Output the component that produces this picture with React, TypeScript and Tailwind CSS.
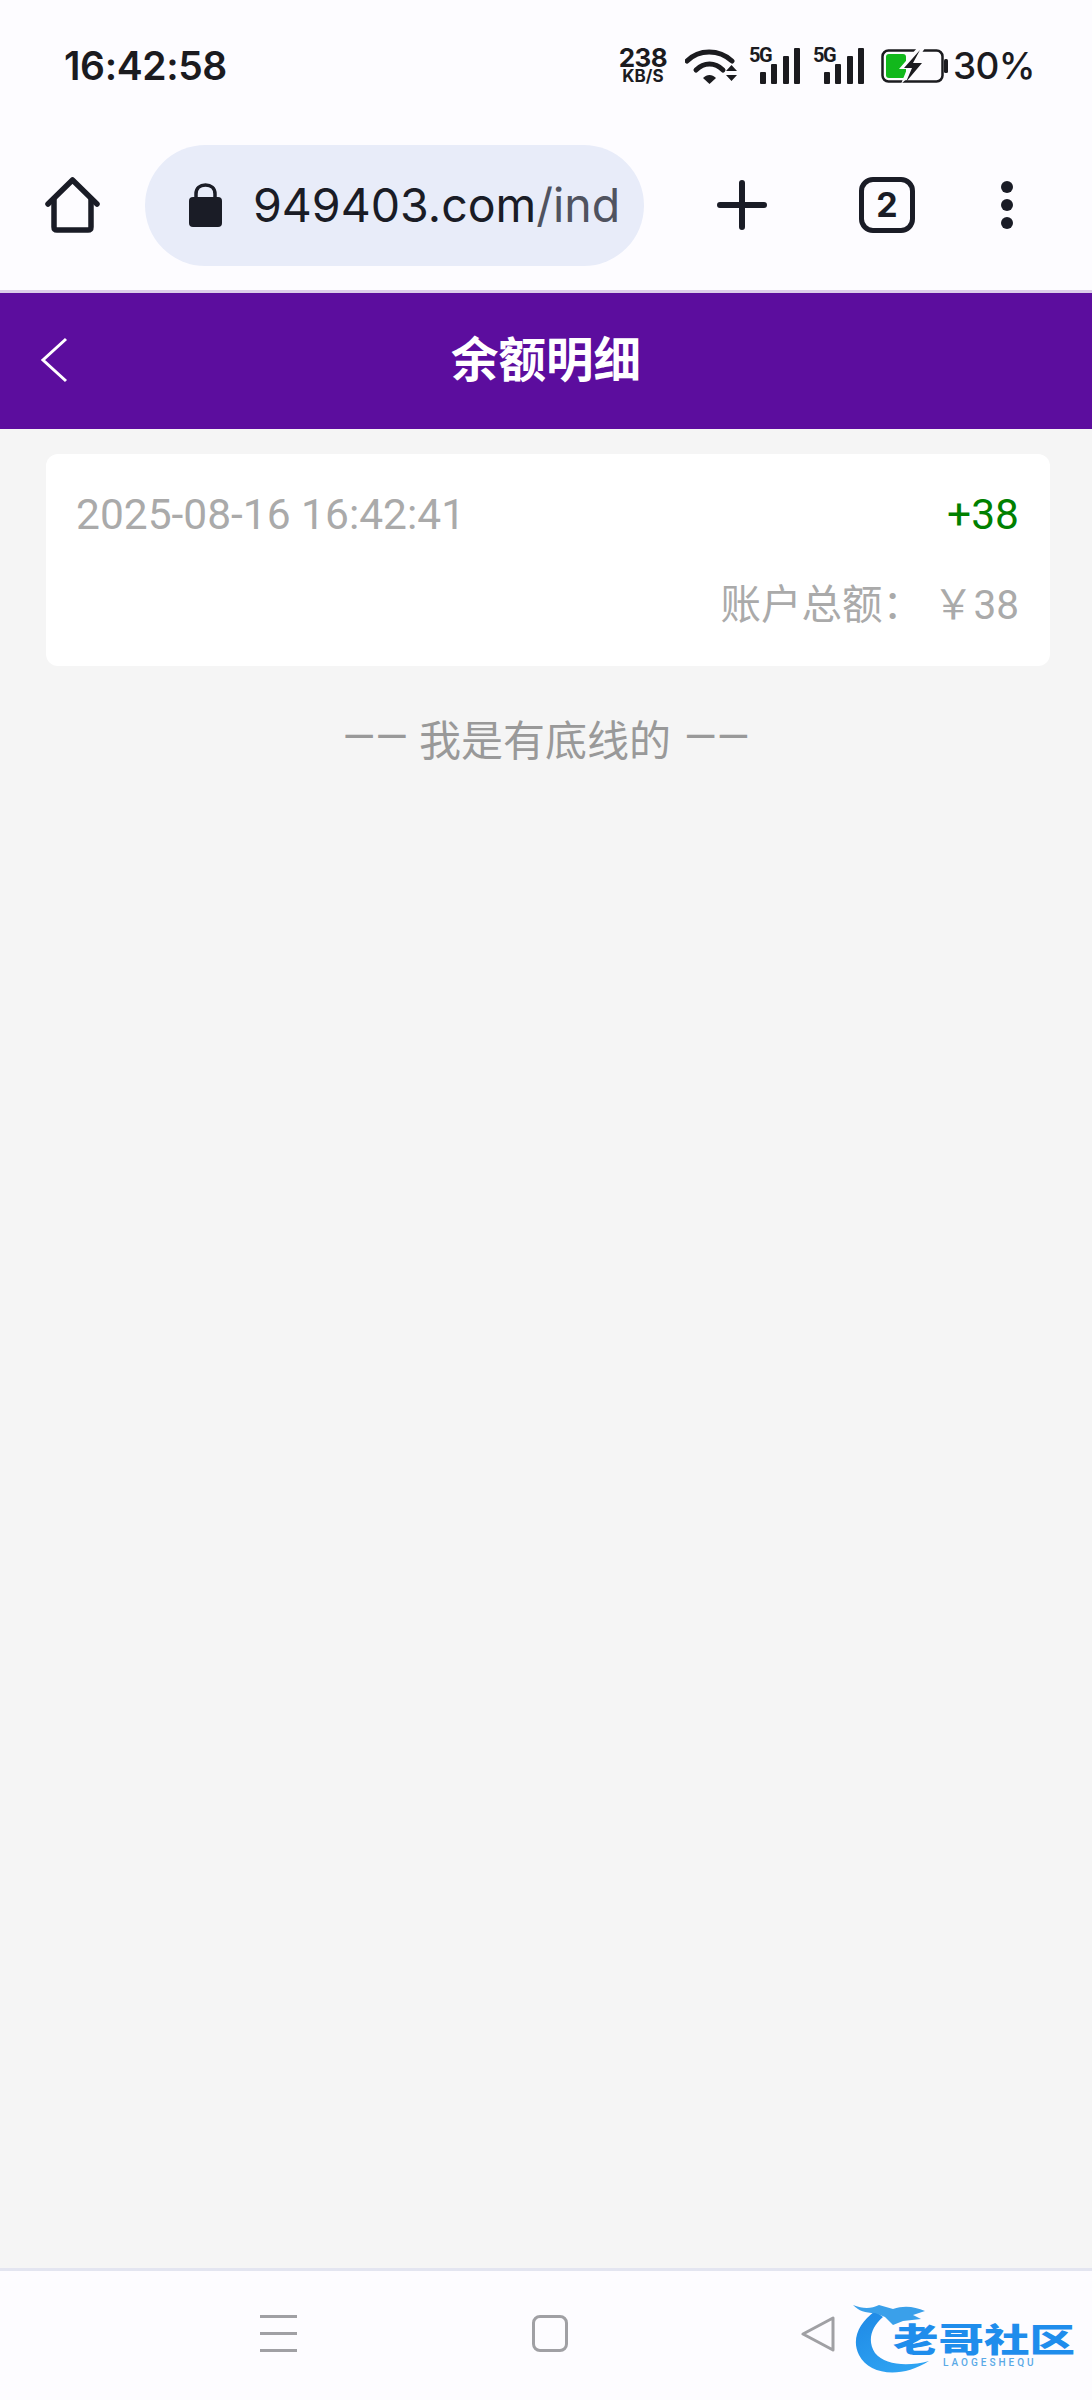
const inter = "font-['Inter','Noto_Sans_CJK_SC',sans-serif]";

function SignalIcon() {
  return (
    <div className="relative h-[36px] w-[50px]">
      <span className="absolute left-[-1px] top-[-3px] font-['Roboto',sans-serif] text-[20px] font-bold leading-[20px] tracking-[-1.5px] text-[#1b1b1f]">5G</span>
      <svg viewBox="0 0 50 36" className="h-[36px] w-[50px]" fill="#1b1b1f">
        <rect x="10" y="24" width="6" height="12" rx="1" />
        <rect x="21" y="16" width="6" height="20" rx="1" />
        <rect x="33" y="8" width="6" height="28" rx="1" />
        <rect x="44" y="0" width="6" height="36" rx="1" />
      </svg>
    </div>
  );
}

function StatusBar() {
  return (
    <div className="flex h-[130px] items-center justify-between pl-[64px] pr-[57px] pt-[1px]">
      <span className={`${inter} text-[39px] font-semibold leading-none tracking-[-0.4px] text-[#1b1b1f]`}>16:42:58</span>
      <div className="flex items-center">
        <div className={`${inter} flex w-[52px] flex-col items-center text-[#1b1b1f]`}>
          <span className="text-[26px] font-bold leading-[22px] tracking-[-0.5px]">238</span>
          <span className="text-[17px] font-bold leading-[15px]">KB/S</span>
        </div>
        <svg viewBox="0 0 52 36" className="ml-[16px] h-[36px] w-[52px]">
          <path d="M2 13 C14 1 34 1 47 13" fill="none" stroke="#1b1b1f" strokeWidth="5" strokeLinecap="round" />
          <path d="M11 22 C19 14 30 14 38 22" fill="none" stroke="#1b1b1f" strokeWidth="5" strokeLinecap="round" />
          <path d="M18 30 L24.500 36 L31 30 C27 26 22 26 18 30 Z" fill="#1b1b1f" />
          <path d="M41 23 L46.500 17 L52 23 Z M41 27 L52 27 L46.500 33 Z" fill="#1b1b1f" />
        </svg>
        <div className="ml-[13px]"><SignalIcon /></div>
        <div className="ml-[14px]"><SignalIcon /></div>
        <svg viewBox="0 0 68 36" className="ml-[17px] h-[36px] w-[68px]">
          <rect x="1.500" y="2.500" width="60" height="31" rx="6" fill="none" stroke="#1b1b1f" strokeWidth="2.500" />
          <rect x="5" y="6" width="20" height="24" rx="3" fill="#12b81c" />
          <rect x="63" y="11" width="4" height="14" rx="1.500" fill="#1b1b1f" />
          <path d="M36 0 L18 21 L26 21 L20 36 L44 14 L35 14 L44 0 Z" fill="#fdfcff" />
          <path d="M39 2 L23 20 L31 20 L25 34 L41 15 L32 15 Z" fill="#1b1b1f" />
        </svg>
        <span className={`${inter} ml-[4px] text-[37px] font-medium leading-none tracking-[-0.6px] text-[#1b1b1f]`}>30%</span>
      </div>
    </div>
  );
}

function Toolbar() {
  return (
    <div className="flex h-[160px] items-center pb-[10px] pl-[45px]">
      <svg viewBox="0 0 55 56" className="h-[56px] w-[55px]" fill="none" stroke="#1a1c26" strokeWidth="5.500" strokeLinejoin="round" strokeLinecap="round">
        <path d="M3 27 L27.500 3 L52 27" />
        <path d="M9 23 L9 50 C9 52 10 53 12 53 L43 53 C45 53 46 52 46 50 L46 23" />
      </svg>
      <div className="ml-[45px] flex h-[121px] w-[499px] items-center overflow-hidden rounded-full bg-[#e8ecf9] pl-[44px]">
        <svg viewBox="0 0 33 44" className="h-[44px] w-[33px] shrink-0" fill="#1a1c26">
          <path d="M7 15 L7 11 C7 5 11 2 16.500 2 C22 2 26 5 26 11 L26 15" fill="none" stroke="#1a1c26" strokeWidth="3.500" />
          <rect x="0" y="14" width="33" height="30" rx="4" />
        </svg>
        <span className="ml-[31px] whitespace-nowrap font-['Inter',sans-serif] text-[46.500px] font-normal leading-none text-[#1a1c26]">
          949403.com<span className="text-[#50535f]">/ind</span>
        </span>
      </div>
      <svg viewBox="0 0 50 50" className="ml-[73px] h-[50px] w-[50px]" stroke="#1a1c26" strokeWidth="6" strokeLinecap="round">
        <path d="M25 3 L25 47 M3 25 L47 25" />
      </svg>
      <div className={`${inter} ml-[92px] flex h-[56px] w-[56px] items-center justify-center rounded-[14px] border-[5.5px] border-[#1a1c26] text-[34px] font-bold leading-none text-[#1a1c26]`}>2</div>
      <div className="ml-[86px] flex flex-col gap-[6px]">
        <span className="h-[12px] w-[12px] rounded-full bg-[#1a1c26]" />
        <span className="h-[12px] w-[12px] rounded-full bg-[#1a1c26]" />
        <span className="h-[12px] w-[12px] rounded-full bg-[#1a1c26]" />
      </div>
    </div>
  );
}

function DetailCard() {
  return (
    <div className="ml-[46px] mr-[42px] mt-[25px] h-[212px] rounded-[12px] bg-white pl-[30px] pr-[31px] pt-[36px] font-['Roboto','Noto_Sans_CJK_SC',sans-serif] text-[42.500px] leading-[50px]">
      <div className="flex items-center justify-between">
        <span className="text-[#aaaaaa]">2025-08-16 16:42:41</span>
        <span className="text-[#008000]">+38</span>
      </div>
      <div className="mt-[40px] flex justify-end text-[40.500px] text-[#aaaaaa]">账户总额： ￥38</div>
    </div>
  );
}

function Logo() {
  return (
    <div className="absolute bottom-[25px] right-[17px] h-[72px] w-[222px]">
      <svg viewBox="0 0 222 72" className="absolute left-0 top-0 h-[72px] w-[222px]">
        <defs>
          <linearGradient id="logoRing" x1="0" y1="0" x2="0.600" y2="1">
            <stop offset="0" stopColor="#1e88e5" />
            <stop offset="1" stopColor="#2ea3f2" />
          </linearGradient>
        </defs>
        <path d="M22 8 C6 20 -2 36 6 52 C16 72 48 76 76 58 C54 64 32 62 22 50 C14 38 18 24 30 14 Z" fill="url(#logoRing)" />
        <path d="M0 2 C10 6 18 6 26 2 L40 6 C52 2 62 4 72 8 L60 12 L68 16 L50 18 L40 22 L32 14 L22 10 C12 10 6 8 0 2 Z" fill="#3aa0ea" />
      </svg>
      <span className="absolute left-[40px] top-[20px] origin-top-left scale-y-[0.72] whitespace-nowrap font-['Noto_Sans_CJK_SC',sans-serif] text-[45.500px] font-black leading-[40px] text-[#1f8dec]">老哥社区</span>
      <span className="absolute left-[90px] top-[54px] whitespace-nowrap font-['Roboto',sans-serif] text-[10px] font-medium leading-[11px] tracking-[3px] text-[#5aa9e6]">LAOGESHEQU</span>
    </div>
  );
}

function NavBar() {
  return (
    <div className="relative h-[132px] border-t-[3px] border-[#e3e5f0] bg-[#fdfcff]">
      <div className="flex items-center pl-[260px] pt-[44px]">
        <div className="flex w-[37px] flex-col gap-[14px]">
          <span className="h-[3px] bg-[#a0a0a4]" />
          <span className="h-[3px] bg-[#a0a0a4]" />
          <span className="h-[3px] bg-[#a0a0a4]" />
        </div>
        <div className="ml-[235px] h-[37px] w-[36px] rounded-[8px] border-[3px] border-[#a0a0a4]" />
        <svg viewBox="0 0 36 36" className="ml-[232px] h-[36px] w-[36px]" fill="none" stroke="#a0a0a4" strokeWidth="3" strokeLinejoin="round">
          <path d="M33 2 L33 34 L3 18 Z" />
        </svg>
      </div>
      <Logo />
    </div>
  );
}

export default function App() {
  return (
    <div className="flex h-[2400px] w-[1092px] flex-col overflow-hidden bg-[#f5f5f5]">
      <div className="bg-[#fdfcff]">
        <StatusBar />
        <Toolbar />
      </div>
      <div className="h-[3px] bg-[#dccdea]" />
      <div className="relative flex h-[136px] items-center justify-center bg-[#5c0d9e] pb-[9px]">
        <svg viewBox="0 0 30 46" className="absolute left-[39px] top-[44px] h-[46px] w-[30px]" fill="none" stroke="#ffffff" strokeWidth="3">
          <path d="M27 2 L4 23 L27 44" />
        </svg>
        <span className="font-['Noto_Sans_CJK_SC',sans-serif] text-[47.500px] font-bold leading-none text-white">余额明细</span>
      </div>
      <div className="flex-1">
        <DetailCard />
        <p className="mt-[47px] flex items-center justify-center text-center font-['Noto_Sans_CJK_SC',sans-serif] text-[42px] leading-[50px] text-[#999999]">
          <span className="mr-[11px] font-['Roboto',sans-serif]">——</span>
          我是有底线的
          <span className="ml-[13px] font-['Roboto',sans-serif]">——</span>
        </p>
      </div>
      <NavBar />
    </div>
  );
}
